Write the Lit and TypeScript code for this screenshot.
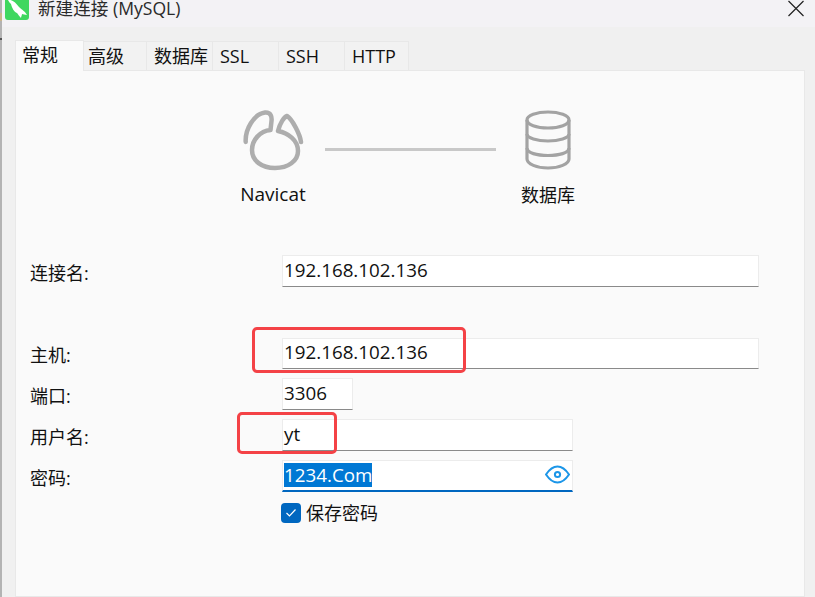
import { LitElement, html, css } from "lit";
import { customElement } from "lit/decorators.js";

@customElement("app-root")
export class AppRoot extends LitElement {
  static styles = css`
    :host {
      display: flex;
      width: 815px;
      height: 597px;
      overflow: hidden;
      font-family: "Open Sans", "Noto Sans CJK SC", sans-serif;
      font-size: 18px;
      color: #111;
      background: #f0f0f0;
    }
    .strip {
      width: 2px;
      flex: none;
      background: linear-gradient(#b3b3b3 0 13px, #c9b58c 13px 21px, #b3b3b3 21px 38px, #555 38px 40px, #b3b3b3 40px);
    }
    .win { flex: 1; display: flex; flex-direction: column; min-width: 0; }
    .title {
      height: 27px;
      flex: none;
      background: #f3f2f5;
      display: flex;
      align-items: flex-start;
      padding-left: 3px;
    }
    .logo { width: 24px; height: 20px; flex: none; display: block; }
    .title span {
      margin-left: 9px;
      font-size: 17.6px;
      line-height: 17px;
      color: #2a2a2a;
    }
    .close { margin-left: auto; margin-right: 11px; display: block; flex: none; }
    .body {
      flex: 1;
      display: flex;
      flex-direction: column;
      padding: 13px 10px 0 13px;
      min-height: 0;
    }
    .tabs { display: flex; height: 31px; flex: none; align-items: flex-end; position: relative; z-index: 1; }
    .tab {
      box-sizing: border-box;
      height: 29px;
      margin-bottom: 1px;
      border: 1px solid #e8e8e8;
      border-left: 0;
      border-bottom: 0;
      background: #f2f2f2;
      font-size: 18px;
      line-height: 29px;
      padding-left: 7px;
      white-space: nowrap;
    }
    .tab.first { padding-left: 4px; }
    .tab.on {
      height: 31px;
      margin-bottom: 0;
      background: #fafafa;
      border-left: 1px solid #e8e8e8;
      padding-left: 6px;
      line-height: 29px;
    }
    .panel {
      flex: 1;
      margin-top: -1px;
      background: #fafafa;
      border: 1px solid #e8e8e8;
      position: relative;
      min-height: 0;
    }
    .diagram {
      display: flex;
      align-items: flex-start;
      padding-left: 207px;
      margin-top: 38px;
    }
    .node {
      width: 100px;
      display: flex;
      flex-direction: column;
      align-items: center;
    }
    .node svg { display: block; }
    .node span { line-height: 24px; margin-top: 7px; font-size: 19px; }
    .node.db span { margin-top: 12px; font-size: 18px; }
    .link { width: 171px; height: 3px; margin: 39px 2px 0; background: #c8c8c8; flex: none; }
    .form { margin-top: 48px; padding-left: 14px; }
    .row { display: flex; align-items: center; }
    .row label { width: 252px; flex: none; font-size: 18px; line-height: 24px; padding-top: 3px; }
    .field {
      box-sizing: border-box;
      background: #fff;
      border: 1px solid #ececec;
      border-bottom: 1px solid #8a8a8a;
      height: 32px;
      padding: 0 0 2px 1px;
      font-size: 18.8px;
      display: flex;
      align-items: center;
      white-space: nowrap;
    }
    .wide { width: 477px; }
    .mid { width: 291px; }
    .short { width: 71px; }
    .host { height: 31px; padding-bottom: 3px; }
    .gap-host { margin-top: 51px; }
    .gap { margin-top: 9px; }
    .pw { border-bottom: 2px solid #0067c0; justify-content: space-between; padding-right: 2px; }
    .sel { background: #0078d4; color: #fff; line-height: 24px; height: 24px; display: block; }
    .check { display: flex; align-items: center; margin: 9px 0 0 251px; font-size: 18px; line-height: 24px; }
    .box {
      width: 20px; height: 20px; border-radius: 4px; background: #0067c0;
      display: flex; align-items: center; justify-content: center; flex: none; margin-right: 5px;
    }
    .mark { position: absolute; border: 3px solid #f44246; border-radius: 5px; box-sizing: border-box; pointer-events: none; }
    .m1 { left: 236px; top: 256px; width: 214px; height: 46px; }
    .m2 { left: 221px; top: 341px; width: 100px; height: 42px; }
  `;

  render() {
    const tabs = [
      ["常规", 69, "on"],
      ["高级", 63, "first"],
      ["数据库", 66, ""],
      ["SSL", 66, ""],
      ["SSH", 66, ""],
      ["HTTP", 64, ""],
    ] as const;
    return html`
      <div class="strip"></div>
      <div class="win">
        <div class="title">
          <svg class="logo" viewBox="0 0 24 20">
            <rect x="0" y="-6" width="24" height="26" rx="3" fill="#3fd75f"/>
            <path d="M3 0C7 -1 11 3 14 7C17 10 20 11 22 15C20 15 18 14 17 14C17 15 16 17 16 18C14 16 13 14 12 13C9 12 7 8 6 4C5 3 4 2 3 0Z" fill="#fff"/>
          </svg>
          <span>新建连接 (MySQL)</span>
          <svg class="close" width="16" height="18" viewBox="0 0 16 18">
            <path d="M0.5 1L15.5 16M15.5 1L0.5 16" stroke="#222" stroke-width="1.2" fill="none"/>
          </svg>
        </div>
        <div class="body">
          <div class="tabs">
            ${tabs.map(
              ([t, w, c]) => html`<div class="tab ${c}" style="width:${w}px">${t}</div>`
            )}
          </div>
          <div class="panel">
            <div class="diagram">
              <div class="node">
                <svg width="66" height="66" viewBox="0 0 66 66" fill="none" stroke="#adadad" stroke-width="4.5" stroke-linecap="round" stroke-linejoin="round">
                  <path d="M5.7 33C5 20 14 5 25 3.5C31 3 32 8 31.5 12L30.5 21C20 22 12 31 12 41C12 52 22 59 35 59C48 59 58 52 58 42C58 31 48 24 38 22C40 14 44 8 47 7C52 10 60 25 61 33"/>
                </svg>
                <span>Navicat</span>
              </div>
              <div class="link"></div>
              <div class="node db">
                <svg width="50" height="62" viewBox="0 0 50 62" fill="none" stroke="#a3a3a3" stroke-width="3.2">
                  <ellipse cx="25" cy="11" rx="21" ry="8"/>
                  <path d="M4 11V50C4 55 14 59 25 59C36 59 46 55 46 50V11"/>
                  <path d="M4 25C4 29 14 32 25 32C36 32 46 29 46 25"/>
                  <path d="M4 39C4 44 14 46.5 25 46.5C36 46.5 46 44 46 39"/>
                </svg>
                <span>数据库</span>
              </div>
            </div>
            <div class="form">
              <div class="row">
                <label>连接名:</label>
                <div class="field wide">192.168.102.136</div>
              </div>
              <div class="row gap-host">
                <label>主机:</label>
                <div class="field wide host">192.168.102.136</div>
              </div>
              <div class="row gap">
                <label>端口:</label>
                <div class="field short">3306</div>
              </div>
              <div class="row gap">
                <label>用户名:</label>
                <div class="field mid">yt</div>
              </div>
              <div class="row gap">
                <label>密码:</label>
                <div class="field mid pw">
                  <span class="sel">1234.Com</span>
                  <svg width="25" height="19" viewBox="0 0 25 19" fill="none" stroke="#1c96e8" stroke-width="2">
                    <path d="M1 9.5C5 3.5 9 1.5 12.5 1.5C16 1.5 20 3.5 24 9.5C20 15.5 16 17.5 12.5 17.5C9 17.5 5 15.5 1 9.5Z"/>
                    <circle cx="12.5" cy="9.5" r="2.6"/>
                  </svg>
                </div>
              </div>
              <div class="check">
                <div class="box">
                  <svg width="12" height="10" viewBox="0 0 12 10" fill="none" stroke="#fff" stroke-width="1.2"><path d="M1.5 5L4.5 8L10.5 1.5"/></svg>
                </div>
                保存密码
              </div>
            </div>
            <div class="mark m1"></div>
            <div class="mark m2"></div>
          </div>
        </div>
      </div>
    `;
  }
}
